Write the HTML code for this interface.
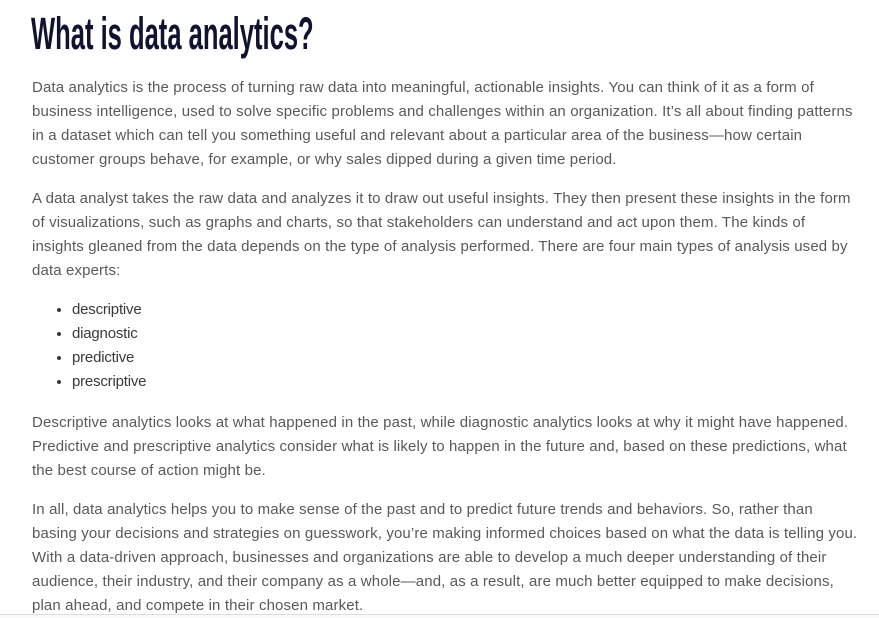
<!DOCTYPE html>
<html><head><meta charset="utf-8"><style>
html,body{margin:0;padding:0;background:#fff;width:879px;height:618px;overflow:hidden}
body{font-family:"Liberation Sans",sans-serif;color:#595959;font-size:15px;position:relative}
h1{position:absolute;left:31px;top:8px;margin:0;font-family:"Liberation Sans Narrow","Liberation Sans",sans-serif;font-weight:bold;font-size:45px;color:#0f1330;transform:scaleX(0.568);transform-origin:left;white-space:nowrap;letter-spacing:0px}
p{position:absolute;left:32px;margin:0;line-height:24px;white-space:nowrap;letter-spacing:0.13px}
ul{position:absolute;left:32px;top:298px;margin:0;padding:0 0 0 40px;line-height:24px;color:#3a3a3a;font-size:15px;letter-spacing:-0.2px}
li{margin:0}
.bar{position:absolute;left:0;top:614px;width:879px;height:4px;border-top:1px solid #ddd;background:#fafafa}
</style></head><body>
<h1>What is data analytics?</h1>
<p style="top:76px">Data analytics is the process of turning raw data into meaningful, actionable insights. You can think of it as a form of<br>business intelligence, used to solve specific problems and challenges within an organization. It’s all about finding patterns<br>in a dataset which can tell you something useful and relevant about a particular area of the business—how certain<br>customer groups behave, for example, or why sales dipped during a given time period.</p>
<p style="top:187px">A data analyst takes the raw data and analyzes it to draw out useful insights. They then present these insights in the form<br>of visualizations, such as graphs and charts, so that stakeholders can understand and act upon them. The kinds of<br>insights gleaned from the data depends on the type of analysis performed. There are four main types of analysis used by<br>data experts:</p>
<ul><li>descriptive</li><li>diagnostic</li><li>predictive</li><li>prescriptive</li></ul>
<p style="top:411px">Descriptive analytics looks at what happened in the past, while diagnostic analytics looks at why it might have happened.<br>Predictive and prescriptive analytics consider what is likely to happen in the future and, based on these predictions, what<br>the best course of action might be.</p>
<p style="top:498px">In all, data analytics helps you to make sense of the past and to predict future trends and behaviors. So, rather than<br>basing your decisions and strategies on guesswork, you’re making informed choices based on what the data is telling you.<br>With a data-driven approach, businesses and organizations are able to develop a much deeper understanding of their<br>audience, their industry, and their company as a whole—and, as a result, are much better equipped to make decisions,<br>plan ahead, and compete in their chosen market.</p>
<div class="bar"></div>
</body></html>
